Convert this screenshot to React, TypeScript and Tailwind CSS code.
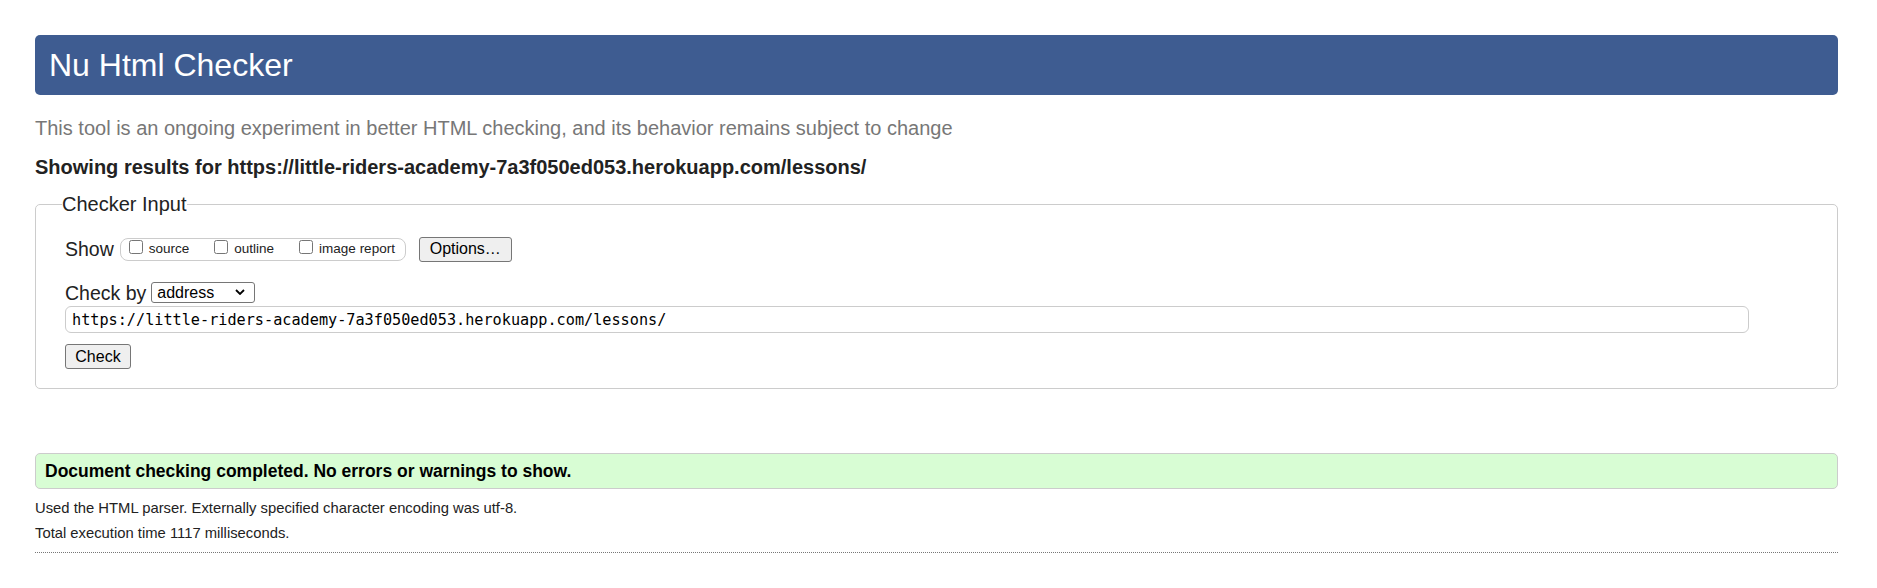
const checkUrl = "https://little-riders-academy-7a3f050ed053.herokuapp.com/lessons/";

const showOptions = ["source", "outline", "image report"];

function ShowOption({ label }: { label: string }) {
  return (
    <label className="flex items-center gap-[6px]">
      <input type="checkbox" className="m-0 h-[14px] w-[14px] -translate-y-[2px]" />
      <span className="text-[13.5px] leading-[16px]">{label}</span>
    </label>
  );
}

export default function App() {
  return (
    <div className="min-h-[588px] bg-white pl-[35px] pr-[39px] pt-[35px] font-['Liberation_Sans',Arial,sans-serif] text-[#222]">
      <h1 className="h-[60px] rounded-[5px] bg-[#3e5c91] pl-[14px] text-[32px] leading-[60px] font-normal text-white">
        Nu Html Checker
      </h1>

      <p className="mt-[21px] text-[20px] leading-[24px] text-[#777]">
        This tool is an ongoing experiment in better HTML checking, and its behavior remains subject to change
      </p>

      <p className="mt-[15px] text-[20px] font-bold leading-[24px]">Showing results for {checkUrl}</p>

      <fieldset className="mt-[14px] rounded-[5px] border border-[#ccc] pb-[19px] pl-[29px] pr-[29px] pt-[20px]">
        <legend className="-ml-[3px] text-[20px] leading-[23px]">Checker Input</legend>

        <div className="flex flex-col">
          <div className="flex h-[26px] items-center">
            <span className="text-[19.5px] leading-[24px]">Show</span>
            <div className="ml-[6px] flex h-[23px] w-[286px] items-center gap-[25px] rounded-[8px] border border-[#ccc] pl-[8px]">
              {showOptions.map((o) => (
                <ShowOption key={o} label={o} />
              ))}
            </div>
            <button className="ml-[13px] h-[25px] w-[93px] rounded-[3px] border border-[#767676] bg-[#efefef] text-[16px] leading-[20px] text-black">
              Options…
            </button>
          </div>

          <div className="mt-[20px] flex h-[21px] items-center">
            <span className="text-[19.5px] leading-[24px]">Check by</span>
            <div className="relative ml-[5px]">
              <select className="h-[21px] w-[104px] appearance-none rounded-[3px] border border-[#767676] bg-white pl-[5px] text-[16px] leading-[19px] text-black">
                <option>address</option>
                <option>file upload</option>
                <option>text input</option>
              </select>
              <svg
                viewBox="0 0 10 6"
                className="pointer-events-none absolute right-[10px] top-[8px] h-[6px] w-[10px]"
              >
                <path d="M1 1 L5 5 L9 1" fill="none" stroke="#000" strokeWidth="1.8" />
              </svg>
            </div>
          </div>

          <input
            type="text"
            readOnly
            value={checkUrl}
            className="mt-[3px] h-[27px] w-[1684px] rounded-[6px] border border-[#ccc] bg-white px-[6px] font-['DejaVu_Sans_Mono','Liberation_Mono',monospace] text-[15.2px] text-black outline-none"
          />

          <div className="mt-[11px]">
            <button className="h-[25px] w-[66px] rounded-[3px] border border-[#767676] bg-[#efefef] text-[16px] leading-[20px] text-black">
              Check
            </button>
          </div>
        </div>
      </fieldset>

      <div className="mt-[64px] flex h-[36px] items-center rounded-[5px] border border-[#ccc] bg-[#d8fdd4] pl-[9px]">
        <p className="text-[17.5px] font-bold leading-[20px] text-black">
          Document checking completed. No errors or warnings to show.
        </p>
      </div>

      <p className="mt-[10px] text-[14.8px] leading-[18px]">
        Used the HTML parser. Externally specified character encoding was utf-8.
      </p>
      <p className="mt-[7px] text-[14.8px] leading-[18px]">Total execution time 1117 milliseconds.</p>
      <div className="mt-[10px] border-b border-dotted border-[#777]" />
    </div>
  );
}
